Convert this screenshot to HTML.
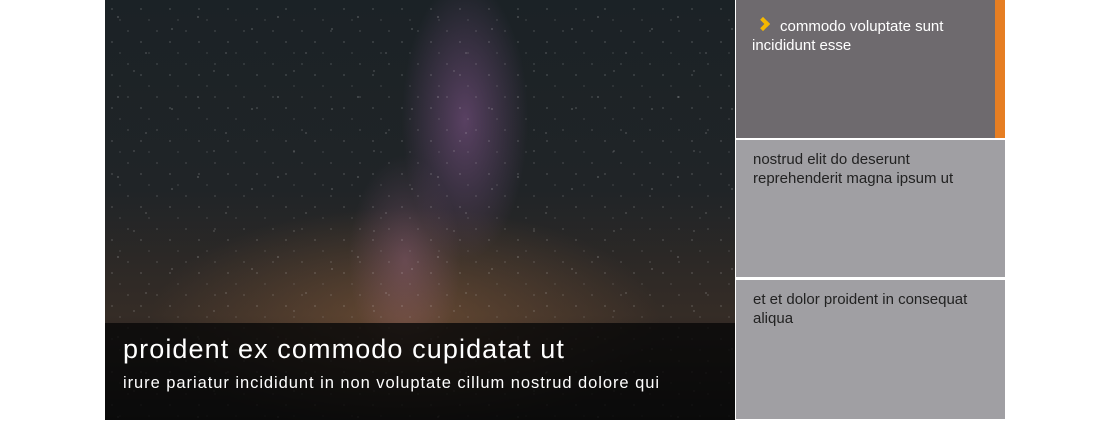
<!DOCTYPE html>
<html><head><meta charset="utf-8"><style>
*{margin:0;padding:0;box-sizing:border-box}
body{width:1110px;height:436px;background:#fff;position:relative;overflow:hidden;font-family:"Liberation Sans",sans-serif}
.img{position:absolute;left:105px;top:0;width:630px;height:420px;overflow:hidden;
background:
radial-gradient(ellipse 90px 200px at 360px 120px,rgba(160,100,170,.45),transparent 70%),
radial-gradient(ellipse 80px 150px at 300px 260px,rgba(170,110,150,.35),transparent 70%),
radial-gradient(ellipse 340px 150px at 300px 320px,rgba(140,95,60,.55),transparent 75%),
linear-gradient(180deg,#1b2226 0%,#202427 45%,#352c26 75%,#151515 100%);}
.stars{position:absolute;inset:0;background-image:
radial-gradient(1px 1px at 13px 17px,#fff 50%,transparent 51%),
radial-gradient(1px 1px at 41px 53px,#ddd 50%,transparent 51%),
radial-gradient(1px 1px at 67px 29px,#eee 50%,transparent 51%),
radial-gradient(1px 1px at 29px 71px,#ccc 50%,transparent 51%);
background-size:80px 80px;opacity:.6}
.stars2{position:absolute;inset:0;background-image:
radial-gradient(1px 1px at 7px 9px,#fff 50%,transparent 51%),
radial-gradient(1px 1px at 23px 31px,#ddd 50%,transparent 51%),
radial-gradient(1px 1px at 15px 20px,#bbb 50%,transparent 51%);
background-size:29px 33px;opacity:.45}
.ov{position:absolute;left:0;top:323px;width:630px;height:97px;background:rgba(8,8,8,.82)}
.t1{position:absolute;left:18px;top:11px;color:#fff;font-size:27px;letter-spacing:1.1px}
.t2{position:absolute;left:18px;top:51px;color:#fff;font-size:16.5px;letter-spacing:.95px}
.tile{position:absolute;left:736px;width:269px;background:#a09fa3;color:#222;font-size:15px;line-height:19px;padding:150px 17px;padding:10px 17px}
.tile span.tx{}
.a{top:0;height:138px;background:#6e6a6e;color:#fff;border-right:10px solid #e67e22;padding:17px 16px 0}
.b{top:140px;height:137px;padding-top:10px}
.c{top:280px;height:139px;padding-top:10px}
.chev{display:inline-block;width:10px;height:10px;border-top:4px solid #f5b800;border-right:4px solid #f5b800;transform:rotate(45deg);margin:0 12px 0 6px;position:relative;top:-2px}
</style></head><body>
<div class="img"><div class="stars"></div><div class="stars2"></div>
<div class="ov"><div class="t1">proident ex commodo cupidatat ut</div><div class="t2">irure pariatur incididunt in non voluptate cillum nostrud dolore qui</div></div></div>
<div class="tile a"><span class="chev"></span>commodo voluptate sunt incididunt esse</div>
<div class="tile b">nostrud elit do deserunt reprehenderit magna ipsum ut</div>
<div class="tile c">et et dolor proident in consequat aliqua</div>
</body></html>
